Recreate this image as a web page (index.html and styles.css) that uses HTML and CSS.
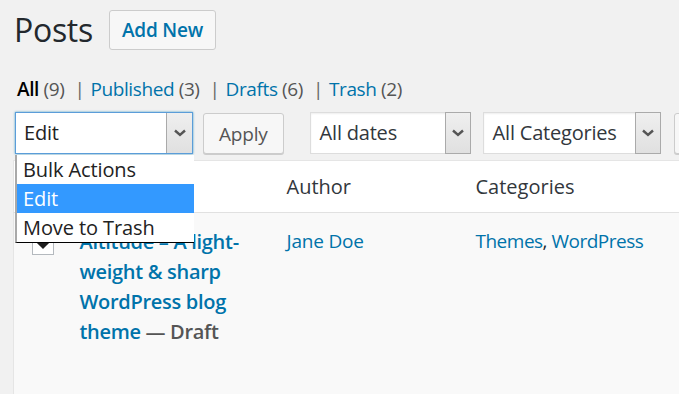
FILE: index.html
```html
<!DOCTYPE html>
<html lang="en">

  <head>
    <meta charset="UTF-8">
    <title>Posts</title>
    <link rel="stylesheet" href="styles.css">
  </head>

  <body>
    <div class="wrap">
      <div class="head">
        <h1 class="title">Posts</h1>
        <a class="add-new" href="#">Add New</a>
      </div>

      <ul class="subsubsub">
        <li><a class="current" href="#">All</a> <span class="count">(9)</span></li>
        <li class="sep">|</li>
        <li><a href="#">Published</a> <span class="count">(3)</span></li>
        <li class="sep">|</li>
        <li><a href="#">Drafts</a> <span class="count">(6)</span></li>
        <li class="sep">|</li>
        <li><a href="#">Trash</a> <span class="count">(2)</span></li>
      </ul>

      <div class="tablenav">
        <div class="select select-bulk is-open">
          <span class="select-value">Edit</span>
          <span class="select-arrow">
            <svg width="12" height="8" viewBox="0 0 12 8"><polyline points="1,1.5 6,6 11,1.5" fill="none" stroke="#555" stroke-width="2.4"/></svg>
          </span>
          <ul class="select-list">
            <li>Bulk Actions</li>
            <li class="selected">Edit</li>
            <li>Move to Trash</li>
          </ul>
        </div>
        <button class="button">Apply</button>
        <div class="select select-dates">
          <span class="select-value">All dates</span>
          <span class="select-arrow">
            <svg width="12" height="8" viewBox="0 0 12 8"><polyline points="1,1.5 6,6 11,1.5" fill="none" stroke="#555" stroke-width="2.4"/></svg>
          </span>
        </div>
        <div class="select select-cats">
          <span class="select-value">All Categories</span>
          <span class="select-arrow">
            <svg width="12" height="8" viewBox="0 0 12 8"><polyline points="1,1.5 6,6 11,1.5" fill="none" stroke="#555" stroke-width="2.4"/></svg>
          </span>
        </div>
        <button class="button button-filter">Filter</button>
      </div>

      <table class="posts">
        <thead>
          <tr>
            <td class="col-cb"></td>
            <th class="col-title">Title</th>
            <th class="col-author">Author</th>
            <th class="col-cats">Categories</th>
          </tr>
        </thead>
        <tbody>
          <tr>
            <td class="col-cb"><span class="checkbox"><span class="check"></span></span></td>
            <td class="col-title"><a class="row-title" href="#">Altitude – A light-weight &amp; sharp WordPress blog theme</a> <span class="state">— Draft</span></td>
            <td class="col-author"><a href="#">Jane Doe</a></td>
            <td class="col-cats"><a href="#">Themes</a>, <a href="#">WordPress</a></td>
          </tr>
        </tbody>
      </table>
    </div>
  </body>

</html>
```

FILE: styles.css
```css
* {
  box-sizing: border-box;
}

body {
  margin: 0;
  background: #f1f1f1;
  color: #23282d;
  font-family: 'Open Sans', 'Noto Sans', sans-serif;
  overflow: hidden;
  height: 394px;
}

a {
  color: #0073aa;
  text-decoration: none;
}

.wrap {
  padding: 9px 0 0 13px;
  width: 760px;
}

.head {
  display: flex;
  align-items: center;
  gap: 16px;
}

.title {
  margin: 0 0 0 1px;
  font-size: 32px;
  font-weight: 400;
  line-height: 42px;
  letter-spacing: -0.3px;
}

.add-new {
  display: block;
  height: 40px;
  padding: 0 12px;
  border: 1px solid #ccc;
  border-radius: 3px;
  background: #f7f7f7;
  font-size: 19px;
  font-weight: 600;
  line-height: 38px;
  letter-spacing: -0.2px;
}

.subsubsub {
  display: flex;
  gap: 8px;
  list-style: none;
  margin: 26px 0 0 4px;
  padding: 0;
  font-size: 19px;
  line-height: 24px;
  color: #555;
  letter-spacing: -0.4px;
}

.subsubsub .current {
  color: #000;
  font-weight: 600;
}

.subsubsub .sep {
  color: #666;
  padding: 0 2px 0 2px;
  margin-right: -4px;
}

.tablenav {
  display: flex;
  gap: 10px;
  margin: 11px 0 0 2px;
  height: 42px;
}

.select {
  position: relative;
  display: flex;
  height: 42px;
  border: 1px solid #ddd;
  background: #fff;
  box-shadow: inset 0 1px 2px rgba(0, 0, 0, 0.07);
  font-size: 20px;
  color: #32373c;
}

.select-value {
  flex: 1;
  padding-left: 9px;
  line-height: 40px;
  letter-spacing: -0.2px;
}

.select-arrow {
  display: flex;
  align-items: center;
  justify-content: center;
  width: 26px;
  height: 40px;
  border: 1px solid #aaa;
  background: linear-gradient(#efefef, #e0e0e0);
}

.select-bulk {
  width: 178px;
  border-color: #5b9dd9;
  box-shadow: 0 0 2px rgba(30, 140, 190, 0.8);
  color: #222;
}

.select-bulk .select-value {
  padding-left: 8px;
}

.select-bulk .select-arrow {
  border-top: 0;
  border-right: 0;
  border-bottom: 0;
}

.select-dates {
  width: 161px;
  margin-left: 16px;
}

.select-cats {
  width: 178px;
  margin-left: 2px;
}

.select-dates .select-arrow,
.select-cats .select-arrow {
  margin-top: -1px;
  height: 42px;
  margin-right: -1px;
}

.select-list {
  position: absolute;
  top: 42px;
  left: -1px;
  width: 179px;
  margin: 0;
  padding: 0;
  list-style: none;
  background: #fff;
  border-left: 2px solid #a9a9a9;
  border-bottom: 1px solid #000;
  z-index: 10;
}

.select-list li {
  height: 29px;
  padding-left: 6px;
  font-size: 20px;
  line-height: 29px;
  color: #222;
  letter-spacing: -0.1px;
}

.select-list .selected {
  background: #3399ff;
  color: #fff;
}

.button {
  height: 41px;
  margin-top: 1px;
  padding: 0 15px;
  border: 1px solid #ccc;
  border-radius: 3px;
  background: #f7f7f7;
  box-shadow: 0 1px 0 #ccc;
  font-family: inherit;
  font-size: 19px;
  color: #555;
  letter-spacing: -0.2px;
}

.button-filter {
  margin-left: 3px;
}

.posts {
  margin-top: 6px;
  border-collapse: collapse;
  table-layout: fixed;
  width: 760px;
  border: 1px solid #e5e5e5;
  font-size: 19px;
  letter-spacing: -0.2px;
}

.posts thead tr {
  background: #fff;
  border-bottom: 1px solid #e1e1e1;
}

.posts th {
  height: 52px;
  padding: 0 14px;
  text-align: left;
  font-size: 20px;
  font-weight: 400;
  color: #32373c;
  letter-spacing: 0;
}

.posts tbody tr {
  background: #f9f9f9;
}

.posts tbody td {
  height: 220px;
  padding: 14px 14px;
  vertical-align: top;
  line-height: 29px;
}

.col-cb {
  width: 52px;
}

.col-title {
  width: 207px;
}

.col-author {
  width: 189px;
}

.col-cats {
  letter-spacing: -0.5px;
}

.posts tbody .col-cb {
  padding: 20px 0 0 18px;
}

.checkbox {
  display: block;
  position: relative;
  width: 22px;
  height: 22px;
  border: 1px solid #b4b9be;
  background: #fff;
}

.check {
  position: absolute;
  left: 5px;
  top: 3px;
  width: 10px;
  height: 10px;
  background: #1e1e1e;
  transform: rotate(45deg);
}

.row-title {
  font-weight: 600;
  font-size: 20px;
  letter-spacing: -0.3px;
}

.state {
  font-size: 20px;
  font-weight: 600;
  color: #555;
  letter-spacing: -0.3px;
}
```
